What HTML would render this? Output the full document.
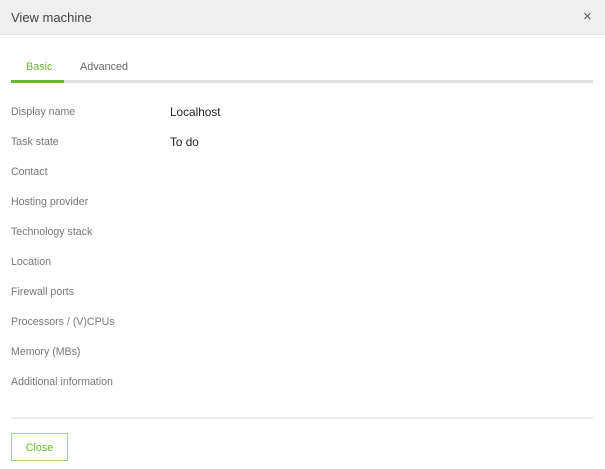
<!DOCTYPE html>
<html><head><meta charset="utf-8"><style>
*{margin:0;padding:0;box-sizing:border-box}
body{width:605px;height:469px;background:#fff;font-family:"Liberation Sans",sans-serif;position:relative;overflow:hidden}
.hdr{position:absolute;left:0;top:0;width:605px;height:35px;background:#efefef;border-bottom:1px solid #e0e0e0}
.hdr .t{position:absolute;left:11px;top:10px;font-size:13px;color:#444}
.hdr .x{position:absolute;left:583px;top:8px;font-size:15px;color:#555}
.tabs{position:absolute;left:11px;top:80px;width:582px;height:3px;background:#e2e2e2}
.tabs .a{position:absolute;left:0;top:0;width:53px;height:3px;background:#6ab82f}
.tab{position:absolute;top:61px;font-size:10.8px}
.l{position:absolute;left:11px;font-size:10.6px;color:#777}
.v{position:absolute;left:170px;font-size:11.8px;color:#222}
.sep{position:absolute;left:11px;top:417px;width:582px;height:2px;background:#ececec}
.btn{position:absolute;left:11px;top:433px;width:57px;height:28px;border:1px solid #9fd67f;color:#6ab82f;font-size:10.8px;text-align:center;line-height:28px}
</style></head><body>
<div class="hdr"><div class="t">View machine</div><div class="x">×</div></div>
<div class="tab" style="left:26px;color:#6ab82f">Basic</div>
<div class="tab" style="left:80px;color:#666">Advanced</div>
<div class="tabs"><div class="a"></div></div>
<div class="l" style="top:106px">Display name</div><div class="v" style="top:105px">Localhost</div>
<div class="l" style="top:136px">Task state</div><div class="v" style="top:135px">To do</div>
<div class="l" style="top:166px">Contact</div>
<div class="l" style="top:196px">Hosting provider</div>
<div class="l" style="top:226px">Technology stack</div>
<div class="l" style="top:256px">Location</div>
<div class="l" style="top:286px">Firewall ports</div>
<div class="l" style="top:316px">Processors / (V)CPUs</div>
<div class="l" style="top:346px">Memory (MBs)</div>
<div class="l" style="top:376px">Additional information</div>
<div class="sep"></div>
<div class="btn">Close</div>
</body></html>
